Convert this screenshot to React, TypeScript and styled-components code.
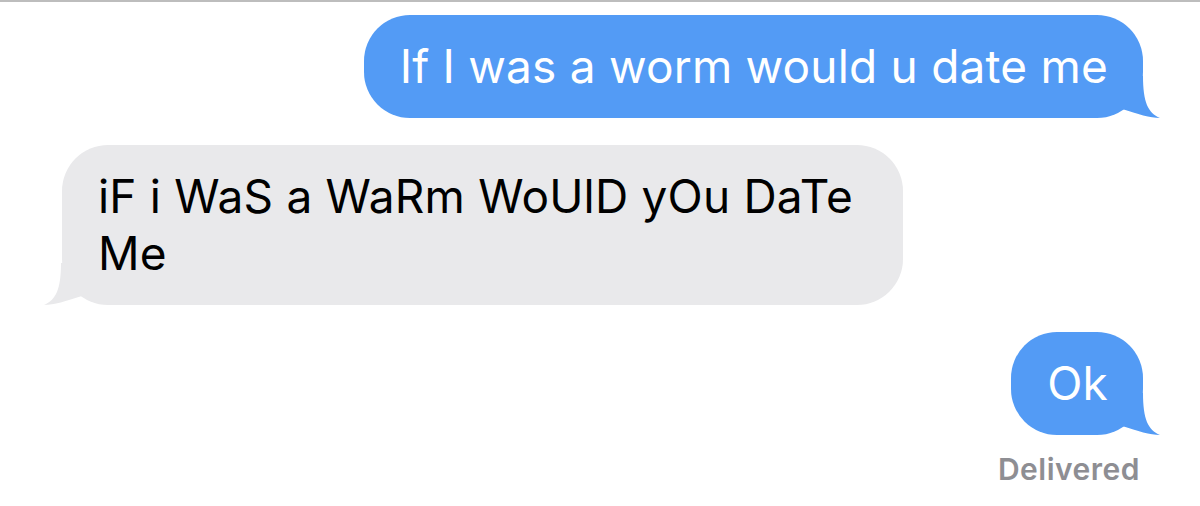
import styled, { createGlobalStyle } from "styled-components";

const GlobalStyle = createGlobalStyle`
    html, body {
        margin: 0;
        padding: 0;
        background: #ffffff;
    }
`

const Thread = styled.main`
    width: 1200px;
    height: 506px;
    box-sizing: border-box;
    border-top: 2px solid #bdbdbd;
    padding: 13px 57px 0 62px;

    display: flex;
    flex-direction: column;
    gap: 27px;

    font-family: Inter, "Liberation Sans", sans-serif;
    overflow: hidden;
`

const Bubble = styled.div<{ $fromMe?: boolean; $width?: number }>`
    position: relative;
    align-self: ${p => p.$fromMe ? "flex-end" : "flex-start"};
    box-sizing: border-box;
    width: ${p => p.$width ? `${p.$width}px` : "auto"};
    padding: 23px ${p => p.$fromMe ? "35px" : "20px"} 23px 36px;

    border-radius: 46px;
    background: ${p => p.$fromMe ? "#539bf5" : "#e9e9eb"};
    color: ${p => p.$fromMe ? "#ffffff" : "#000000"};

    font-size: 46px;
    line-height: 57px;
    letter-spacing: 0.2px;
`

const TailSvg = styled.svg<{ $fromMe?: boolean }>`
    position: absolute;
    bottom: 0;
    width: 50px;
    height: 42px;
    ${p => p.$fromMe ? "right: -17px;" : "left: -18px; transform: scaleX(-1);"}
`

const Status = styled.div`
    align-self: flex-end;
    margin-top: -11px;
    padding-right: 3px;

    font-size: 30px;
    font-weight: 600;
    letter-spacing: 0.5px;
    color: #8e8e93;
`

function Tail({ fromMe }: { fromMe?: boolean }) {
    return (
        <TailSvg $fromMe={fromMe} viewBox="0 0 50 42" aria-hidden="true">
            <path
                d="M33 0 C33 26 38 37 50 42 C40 42 28 38 12 33 L0 33 L0 0 Z"
                fill={fromMe ? "#539bf5" : "#e9e9eb"}
            />
        </TailSvg>
    )
}

function Message({ text, fromMe, width }: { text: string; fromMe?: boolean; width?: number }) {
    return (
        <Bubble $fromMe={fromMe} $width={width}>
            {text}
            <Tail fromMe={fromMe} />
        </Bubble>
    )
}

export default function App() {
    return (
        <>
            <GlobalStyle />
            <Thread>
                <Message fromMe text="If I was a worm would u date me" />
                <Message width={841} text="iF i WaS a WaRm WoUlD yOu DaTe Me" />
                <Message fromMe text="Ok" />
                <Status>Delivered</Status>
            </Thread>
        </>
    )
}
